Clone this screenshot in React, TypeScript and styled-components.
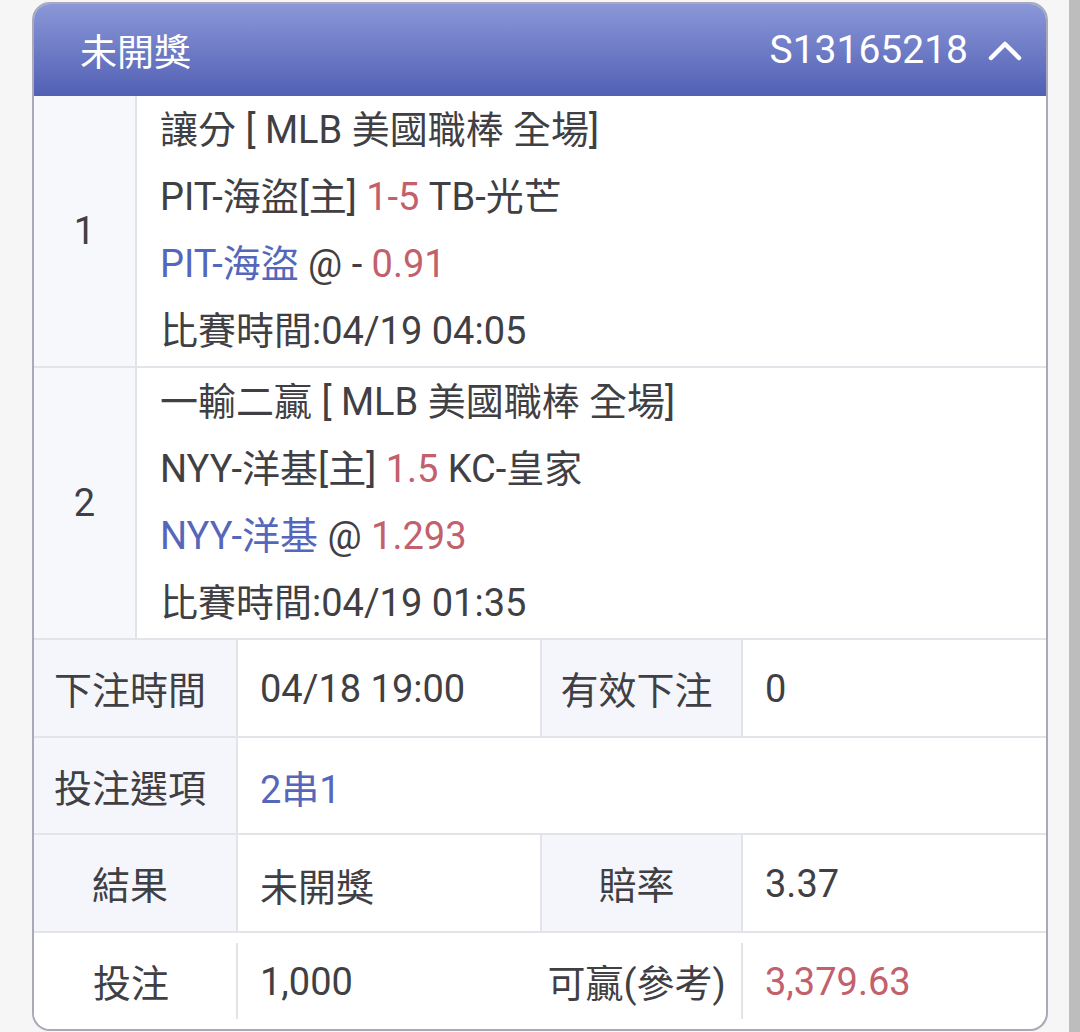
import styled, { createGlobalStyle } from 'styled-components';

const GlobalStyle = createGlobalStyle`
  html, body {
    margin: 0;
    padding: 0;
    background: #f6f6f7;
  }
  body {
    font-family: Roboto, "Noto Sans CJK TC", "Noto Sans", sans-serif;
    color: #404044;
  }
`;

const Page = styled.div`
  display: flex;
  height: 1032px;
  padding-left: 32px;
  box-sizing: border-box;
`;

const Card = styled.div`
  width: 1016px;
  margin-top: 2px;
  height: 1029px;
  box-sizing: border-box;
  border: 2px solid #a9a9b9;
  border-radius: 18px;
  overflow: hidden;
  background: #fff;
  display: flex;
  flex-direction: column;
`;

const ScrollTrack = styled.div`
  margin-left: auto;
  width: 11px;
  background: #bdbdbd;
`;

const Header = styled.div`
  height: 92px;
  flex: none;
  display: flex;
  align-items: center;
  justify-content: space-between;
  padding: 0 24px 0 46px;
  background: linear-gradient(180deg, #8a97d8 0%, #5260b4 100%);
  color: #fff;
  font-size: 37px;
`;

const HeaderRight = styled.div`
  display: flex;
  align-items: center;
  gap: 20px;
  font-size: 39px;
`;

const Leg = styled.div`
  display: flex;
  border-bottom: 2px solid #e3e4ea;
`;

const LegIndex = styled.div`
  width: 101px;
  flex: none;
  display: flex;
  align-items: center;
  justify-content: center;
  background: #f7f8fc;
  border-right: 2px solid #e3e4ea;
  font-size: 38px;
`;

const LegBody = styled.div`
  flex: 1;
  padding: 1px 23px;
  font-size: 38px;
  line-height: 67px;
`;

const Line = styled.div`
  white-space: nowrap;
`;

const Tone = styled.span<{ $tone: 'blue' | 'red' }>`
  color: ${p => (p.$tone === 'blue' ? '#5567bb' : '#c2606c')};
`;

const InfoRow = styled.div<{ $plain?: boolean }>`
  display: grid;
  grid-template-columns: 204px 302px 203px 1fr;
  height: ${p => (p.$plain ? '97px' : '96px')};
  border-bottom: ${p => (p.$plain ? 'none' : '2px solid #e3e4ea')};
  font-size: 38px;
`;

const Label = styled.div<{ $plain?: boolean; $span?: boolean }>`
  display: flex;
  align-items: center;
  justify-content: center;
  padding-right: 10px;
  background: ${p => (p.$plain ? '#fff' : '#f5f6fb')};
  border-right: ${p => (p.$plain ? 'none' : '2px solid #e3e4ea')};
  border-left: ${p => (p.$span ? '2px solid #e3e4ea' : 'none')};
`;

const Value = styled.div<{ $plain?: boolean; $wide?: boolean }>`
  display: flex;
  align-items: center;
  padding: 3px 0 0 22px;
  grid-column: ${p => (p.$wide ? 'span 3' : 'auto')};
  ${p =>
    p.$plain &&
    `
    border-left: 2px solid #e3e4ea;
    margin: 10px 0 10px -2px;
    padding-left: 22px;
  `}
`;

const Chevron = () => (
  <svg width="34" height="22" viewBox="0 0 34 22" fill="none">
    <path d="M3 19 L17 5 L31 19" stroke="#fff" strokeWidth="4.5" strokeLinecap="round" strokeLinejoin="round" />
  </svg>
);

export default function App() {
  return (
    <>
      <GlobalStyle />
      <Page>
        <Card>
          <Header>
            <span>未開獎</span>
            <HeaderRight>
              <span>S13165218</span>
              <Chevron />
            </HeaderRight>
          </Header>

          <Leg>
            <LegIndex>1</LegIndex>
            <LegBody>
              <Line>讓分 [ MLB 美國職棒 全場]</Line>
              <Line>
                PIT-海盜[主] <Tone $tone="red">1-5</Tone> TB-光芒
              </Line>
              <Line>
                <Tone $tone="blue">PIT-海盜</Tone> @ - <Tone $tone="red">0.91</Tone>
              </Line>
              <Line>比賽時間:04/19 04:05</Line>
            </LegBody>
          </Leg>

          <Leg>
            <LegIndex>2</LegIndex>
            <LegBody>
              <Line>一輸二贏 [ MLB 美國職棒 全場]</Line>
              <Line>
                NYY-洋基[主] <Tone $tone="red">1.5</Tone> KC-皇家
              </Line>
              <Line>
                <Tone $tone="blue">NYY-洋基</Tone> @ <Tone $tone="red">1.293</Tone>
              </Line>
              <Line>比賽時間:04/19 01:35</Line>
            </LegBody>
          </Leg>

          <InfoRow>
            <Label>下注時間</Label>
            <Value>04/18 19:00</Value>
            <Label $span>有效下注</Label>
            <Value>0</Value>
          </InfoRow>
          <InfoRow>
            <Label>投注選項</Label>
            <Value $wide>
              <Tone $tone="blue">2串1</Tone>
            </Value>
          </InfoRow>
          <InfoRow>
            <Label>結果</Label>
            <Value>未開獎</Value>
            <Label $span>賠率</Label>
            <Value>3.37</Value>
          </InfoRow>
          <InfoRow $plain>
            <Label $plain>投注</Label>
            <Value $plain>1,000</Value>
            <Label $plain>可贏(參考)</Label>
            <Value $plain>
              <Tone $tone="red">3,379.63</Tone>
            </Value>
          </InfoRow>
        </Card>
        <ScrollTrack />
      </Page>
    </>
  );
}
